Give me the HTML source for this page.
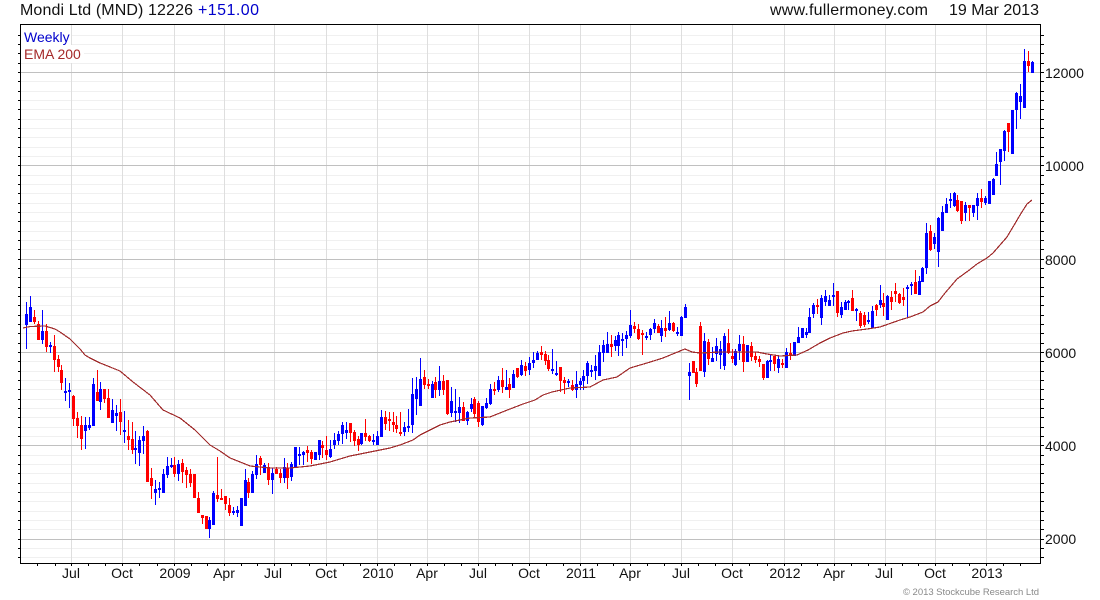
<!DOCTYPE html>
<html><head><meta charset="utf-8"><title>Mondi Ltd (MND)</title>
<style>
html,body{margin:0;padding:0;background:#fff}
body{width:1100px;height:600px;overflow:hidden;position:relative}
svg{position:absolute;left:0;top:0}
text{font-family:"Liberation Sans",Arial,sans-serif;fill:#111}
.t{font-size:16px}.a{font-size:14px}
</style></head><body>
<svg id="s" width="1100" height="600" viewBox="0 0 1100 600" xmlns="http://www.w3.org/2000/svg">
<path id="minor" fill="#f0f0f0" shape-rendering="crispEdges" d=""/>
<path id="vert" fill="#dedede" shape-rendering="crispEdges" d=""/>
<path id="major" fill="#c0c0c0" shape-rendering="crispEdges" d=""/>
<rect x="21" y="26" width="50" height="19" fill="#fff"/>
<rect x="21" y="45" width="63" height="18" fill="#fff"/>
<path id="bw" fill="#0000ff" shape-rendering="crispEdges" d=""/>
<path id="rw" fill="#ff0000" shape-rendering="crispEdges" d=""/>
<polyline fill="none" stroke="#a02c2c" stroke-width="1.2" shape-rendering="crispEdges" points="23,328 30,326.5 45,326 55,329 60,332 70,339 80,349 85,355 90,358 100,363 110,367 120,371 133,382 150,395 163,410 180,418 195,430 210,445 220,451 230,458 240,462 250,466 270,468 290,468 310,466 330,462 350,456 370,452 390,448 400,445 413,440 420,435 430,430 440,425 450,422 470,418 490,417 510,409 523,404 535,400 543,395 552,392 570,388 590,387 603,380 617,377 630,368 647,363 663,358 680,351 685,349 692,352 700,353 720,352 757,352 767,354 780,356 797,355 808,350 820,343 830,338 843,333 852,331 867,329 880,327 900,320 910,317 923,312 930,306 938,302 945,293 957,279 968,271 977,264 987,258 993,253 1000,245 1007,237 1013,227 1020,215 1027,204 1032,200"/>
<path id="ticks" fill="#000" shape-rendering="crispEdges" d=""/>
<rect x="20.5" y="24.5" width="1020" height="539" fill="none" stroke="#000" stroke-width="1" shape-rendering="crispEdges"/>

<text class="t" x="20" y="15" textLength="173">Mondi Ltd (MND) 12226</text>
<text class="t" x="198" y="15" textLength="61" style="fill:#0000cc">+151.00</text>
<text class="t" x="770" y="15" textLength="158">www.fullermoney.com</text>
<text class="t" x="949" y="15" textLength="90">19 Mar 2013</text>
<text class="a" x="24" y="42" style="fill:#0000cc">Weekly</text>
<text class="a" x="24" y="59" style="fill:#a52a2a">EMA 200</text>

<text class="a" x="1045" y="78">12000</text>
<text class="a" x="1045" y="171">10000</text>
<text class="a" x="1045" y="265">8000</text>
<text class="a" x="1045" y="358">6000</text>
<text class="a" x="1045" y="451">4000</text>
<text class="a" x="1045" y="544">2000</text>

<g class="a" text-anchor="middle">
<text x="71" y="578">Jul</text><text x="122" y="578">Oct</text><text x="175" y="578">2009</text><text x="224" y="578">Apr</text><text x="273" y="578">Jul</text><text x="326" y="578">Oct</text><text x="378" y="578">2010</text><text x="427" y="578">Apr</text><text x="478" y="578">Jul</text><text x="529" y="578">Oct</text><text x="581" y="578">2011</text><text x="630" y="578">Apr</text><text x="681" y="578">Jul</text><text x="732" y="578">Oct</text><text x="785" y="578">2012</text><text x="834" y="578">Apr</text><text x="884" y="578">Jul</text><text x="935" y="578">Oct</text><text x="987" y="578">2013</text>
</g>
<text x="903" y="595" textLength="136" style="font-size:9.5px;fill:#8a8a8a">© 2013 Stockcube Research Ltd</text>
</svg>
<script>
var Y=function(v){return Math.round(538.5-(v-2000)*0.04665)};
var mi='',ma='',ve='',ti='';
var vs=[71,122,174,224,274,326,377,427,478,529,580,630,681,732,784,834,885,935,986];
for(var v=1600;v<=12800;v+=200){var y=Y(v);if(y<25||y>=563)continue;
 if(v%2000==0)ma+='M21 '+y+'h1019v1h-1019z';else mi+='M21 '+y+'h1019v1h-1019z';
 ti+='M18 '+y+'h2v1h-2zM1041 '+y+'h3v1h-3z';}
vs.forEach(function(x,i){ve+='M'+x+' 25h1v538h-1z';ti+='M'+x+' 564h1v2h-1z';
 var n=i<vs.length-1?vs[i+1]:1037;var d=(n-x)/3;
 if(i==0){ti+='M37 564h1v2h-1zM55 564h1v2h-1z';}
 for(var k=1;k<3;k++){var t=Math.round(x+d*k);if(t<1040)ti+='M'+t+' 564h1v2h-1z';}
});
document.getElementById('minor').setAttribute('d',mi);
document.getElementById('major').setAttribute('d',ma);
document.getElementById('vert').setAttribute('d',ve);
document.getElementById('ticks').setAttribute('d',ti);
var D="26b302,349,314,325;30b296,322,307,322;34r310,324,317,322;38r321,340,324,340;42b310,344,331,340;46r324,352,331,347;50b342,353,345,347;54r335,372,346,360;58r355,372,359,367;61r365,390,370,383;65b378,401,391,393;69b383,408,390,392;73r395,426,396,419;77r412,438,418,426;81r416,450,425,439;85b417,449,425,431;89b417,430,425,428;93b378,426,384,426;97r370,401,392,401;100b382,410,389,402;104r389,403,389,399;108r389,418,398,418;112b399,423,410,423;116b405,431,413,416;120r399,435,412,422;124b411,443,430,432;128r420,450,436,440;132r422,454,439,450;135b431,464,448,450;139b436,466,440,453;143b426,454,436,441;147r430,482,431,482;151r468,499,478,486;155b480,505,489,493;159b482,498,488,490;163b469,493,474,493;167b457,478,466,475;171b458,468,465,467;174r457,477,465,474;178b460,481,464,474;182r459,483,463,472;186r467,488,470,475;190r469,487,474,483;194r474,498,474,498;198r492,513,498,513;202r515,524,515,518;206r516,529,516,529;209b517,538,520,529;213b491,525,493,525;217r457,502,495,499;221r489,500,498,500;225r496,510,496,504;229r498,516,505,513;233b507,515,511,513;237b506,517,510,513;241b498,526,498,526;245b469,506,480,506;248r478,498,482,493;252b471,493,474,493;256b455,479,464,475;260r456,475,458,465;264b463,473,465,473;268r463,485,467,480;272b468,494,473,480;276r467,474,469,474;280r469,483,473,478;284b458,483,467,478;287r463,489,468,478;291b462,481,464,477;295b447,467,447,467;299b447,465,454,456;303b451,465,452,455;307r446,462,450,453;311r450,464,452,459;315b452,460,452,460;319b440,460,440,455;322r441,458,445,448;326r436,460,450,455;330b440,458,449,457;334b433,449,440,445;338b431,445,434,441;342b422,444,425,434;346b422,439,430,433;350r423,442,423,433;354r430,446,432,441;358r436,451,439,445;361b433,445,433,444;365r419,441,433,437;369r435,442,436,441;373b434,445,440,442;377b431,445,436,445;381b410,437,417,437;385r411,430,417,424;389r412,431,419,421;393r412,432,422,425;396r416,433,425,429;400r412,436,432,434;404b422,436,427,432;408b409,432,426,428;412b378,433,394,425;416b377,415,389,399;420b358,406,379,406;424r370,389,377,385;428r379,389,384,386;432b381,398,384,398;435r377,398,382,390;439b366,396,381,390;443r375,395,381,390;447r380,415,380,414;451b387,417,401,413;455b389,422,411,413;459b397,423,407,413;463r402,421,407,421;467b411,425,412,421;471b398,412,404,409;474r397,417,399,414;478r401,427,403,422;482b406,426,406,425;486b398,409,403,408;490b384,405,389,404;494r382,395,389,391;498b376,392,380,390;502r368,393,380,387;506b370,390,387,390;509r378,398,384,390;513b370,388,374,388;517r368,378,368,377;521b360,376,365,375;525r362,376,366,371;529b357,375,363,370;533b352,368,360,363;537b351,360,353,360;541r346,360,352,355;545r351,365,354,361;548r355,371,360,369;552b349,374,369,371;556b361,376,373,375;560r367,392,367,381;564r377,394,380,383;568b379,387,381,383;572r380,391,385,390;576b371,398,384,390;580b378,390,381,385;583b370,390,376,381;587b361,384,363,376;591b365,377,370,372;595b355,380,366,371;599b345,376,352,376;603b340,362,345,353;607b332,353,344,353;611r335,357,344,347;615b336,351,340,346;618b332,356,335,346;622b333,356,339,341;626b331,348,335,339;630b310,338,325,336;634r322,333,326,329;638r324,340,329,339;642r330,355,333,335;646b332,340,336,338;650b328,340,329,335;654b319,333,323,329;658r324,333,326,333;661b320,342,328,336;665r317,337,328,331;669b311,331,323,330;673r322,332,323,331;677b327,336,332,334;681b316,336,317,336;685b304,318,307,318;689b363,400,372,376;693r361,373,361,373;696r368,387,372,384;700r322,371,326,371;704b333,377,341,372;708r339,365,342,359;712b347,362,358,362;716b338,361,346,354;720b341,369,349,355;724b333,370,336,366;728r329,354,343,353;732r349,363,356,359;735b349,366,351,365;739b335,360,344,351;743r336,372,344,362;747b345,362,345,362;751r342,361,346,357;755r352,363,356,360;759r356,367,359,362;763r364,380,364,378;767b360,378,361,378;770b355,371,360,362;774r356,371,356,364;778b356,373,359,368;782r359,368,363,365;786b348,368,352,368;790r343,360,353,356;794b342,356,342,356;798b327,343,337,343;802b328,338,328,338;806b328,338,332,335;809b308,333,317,333;813b303,318,305,314;817r299,314,305,307;821b295,325,298,318;825b290,306,296,302;829b295,306,300,306;833b283,306,295,297;837r291,317,291,313;841b302,318,307,315;845b300,310,302,310;848b300,310,301,303;852r290,311,298,311;856b308,321,309,311;860r311,328,313,326;864r312,327,315,325;868b312,324,320,322;872b306,328,311,328;876r304,316,305,310;880b285,308,300,305;883r293,316,303,307;887b295,320,296,320;891r291,310,297,302;895r283,302,291,294;899r293,304,294,303;903r288,306,297,300;907b285,317,287,289;911b282,295,284,286;915r270,294,282,294;919b276,295,281,295;922b267,282,268,282;926b223,274,233,268;930r225,251,231,250;934b233,249,237,244;938b217,267,218,252;942b206,231,212,231;946b198,213,204,213;950b193,208,199,201;954b192,207,193,206;957r195,212,200,211;961r201,224,201,221;965b202,221,205,213;969r205,221,205,208;973b205,217,205,213;977b193,220,198,206;981r189,208,198,202;985b196,205,198,203;989b181,204,181,204;993b178,195,179,195;996b152,176,164,176;1000b149,185,149,162;1004b130,161,131,151;1008r123,152,123,132;1012b110,154,110,154;1016b92,129,93,110;1020b84,119,96,102;1024b49,108,61,108;1028r51,72,61,66;1032b61,73,62,73";
var b='',r='';
D.split(';').forEach(function(e){var m=e.match(/^(\d+)([br])(\d+),(\d+),(\d+),(\d+)$/);var x=+m[1],hi=+m[3],lo=+m[4],t=+m[5],bo=+m[6];
 var p='M'+x+' '+hi+'h1V'+lo+'h-1zM'+(x-1)+' '+t+'h3V'+Math.max(bo,t+2)+'h-3z';
 if(m[2]=='b')b+=p;else r+=p;});
document.getElementById('bw').setAttribute('d',b);
document.getElementById('rw').setAttribute('d',r);
</script>
</body></html>
